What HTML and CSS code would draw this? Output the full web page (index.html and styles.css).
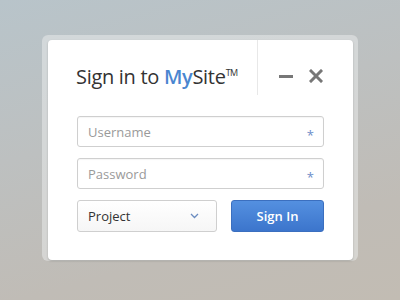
FILE: index.html
```html
<!DOCTYPE html>
<html>
<head>
<meta charset="utf-8">
<link rel="stylesheet" href="styles.css">
</head>
<body>
<div class="frame">
  <div class="card">
    <div class="header">
      <div class="title">Sign in to <span class="brand">My</span>Site<span class="tm">TM</span></div>
      <div class="controls">
        <span class="minimize"></span>
        <svg class="close" width="14" height="14" viewBox="0 0 14 14"><path d="M2 2 L12 12 M12 2 L2 12" stroke="#777" stroke-width="3" stroke-linecap="square"/></svg>
      </div>
    </div>
    <div class="form">
      <div class="field"><span class="placeholder">Username</span><span class="req">*</span></div>
      <div class="field"><span class="placeholder">Password</span><span class="req">*</span></div>
      <div class="row">
        <div class="select"><span>Project</span>
          <svg width="9" height="6" viewBox="0 0 9 6"><path d="M1 1 L4.5 4.5 L8 1" fill="none" stroke="#6b8cc0" stroke-width="1.3"/></svg>
        </div>
        <div class="button">Sign In</div>
      </div>
    </div>
  </div>
</div>
</body>
</html>
```
FILE: styles.css
```css
html, body {
  margin: 0;
  width: 400px;
  height: 300px;
  overflow: hidden;
}
body {
  background: linear-gradient(165deg, #b8c4ca 0%, #bdc0c0 40%, #c0bcb6 75%, #c2bcb3 100%);
  font-family: "Open Sans", "Noto Sans", sans-serif;
  padding: 35px 0 0 42px;
  box-sizing: border-box;
}
.frame {
  width: 316px;
  padding: 5px 5px 1px 6px;
  box-sizing: border-box;
  border-radius: 6px;
  background: rgba(235, 238, 238, 0.5);
}
.card {
  background: #fff;
  border-radius: 4px;
  height: 220px;
  box-shadow: 0 1px 2px rgba(100, 100, 95, 0.4);
}
.header {
  display: flex;
  height: 55px;
}
.title {
  width: 210px;
  box-sizing: border-box;
  border-right: 1px solid #e8e8e8;
  padding: 23px 0 0 28px;
  font-size: 20px;
  color: #333;
  letter-spacing: -0.3px;
  white-space: nowrap;
}
.brand {
  color: #4a86d0;
  font-weight: 600;
}
.tm {
  font-size: 9px;
  vertical-align: 8px;
  letter-spacing: -0.6px;
}
.controls {
  display: flex;
  align-items: center;
  padding: 29px 0 0 21px;
  align-self: flex-start;
  gap: 16px;
}
.minimize {
  width: 14px;
  height: 3px;
  background: #777;
}
.form {
  padding: 21px 29px 0;
  display: flex;
  flex-direction: column;
  gap: 11px;
}
.field {
  height: 31px;
  box-sizing: border-box;
  border: 1px solid #cfcfcf;
  border-radius: 3px;
  display: flex;
  align-items: center;
  justify-content: space-between;
  padding: 0 9px 0 10px;
  box-shadow: inset 0 1px 1px rgba(0,0,0,0.04);
}
.placeholder {
  color: #9a9a9a;
  font-size: 13px;
}
.req {
  color: #6b8cc8;
  font-size: 13px;
  padding-top: 6px;
}
.row {
  display: flex;
  gap: 14px;
}
.select {
  width: 140px;
  height: 32px;
  box-sizing: border-box;
  border: 1px solid #cfcfcf;
  border-radius: 3px;
  background: linear-gradient(#fff, #f6f6f6);
  display: flex;
  align-items: center;
  justify-content: space-between;
  padding: 0 17px 0 10px;
  font-size: 13px;
  color: #333;
}
.button {
  flex: 1;
  height: 32px;
  box-sizing: border-box;
  border-radius: 3px;
  border: 1px solid #3b6fbf;
  background: linear-gradient(#5490e0, #3c75cc);
  color: #fff;
  font-size: 13px;
  font-weight: 600;
  display: flex;
  align-items: center;
  justify-content: center;
}
```
